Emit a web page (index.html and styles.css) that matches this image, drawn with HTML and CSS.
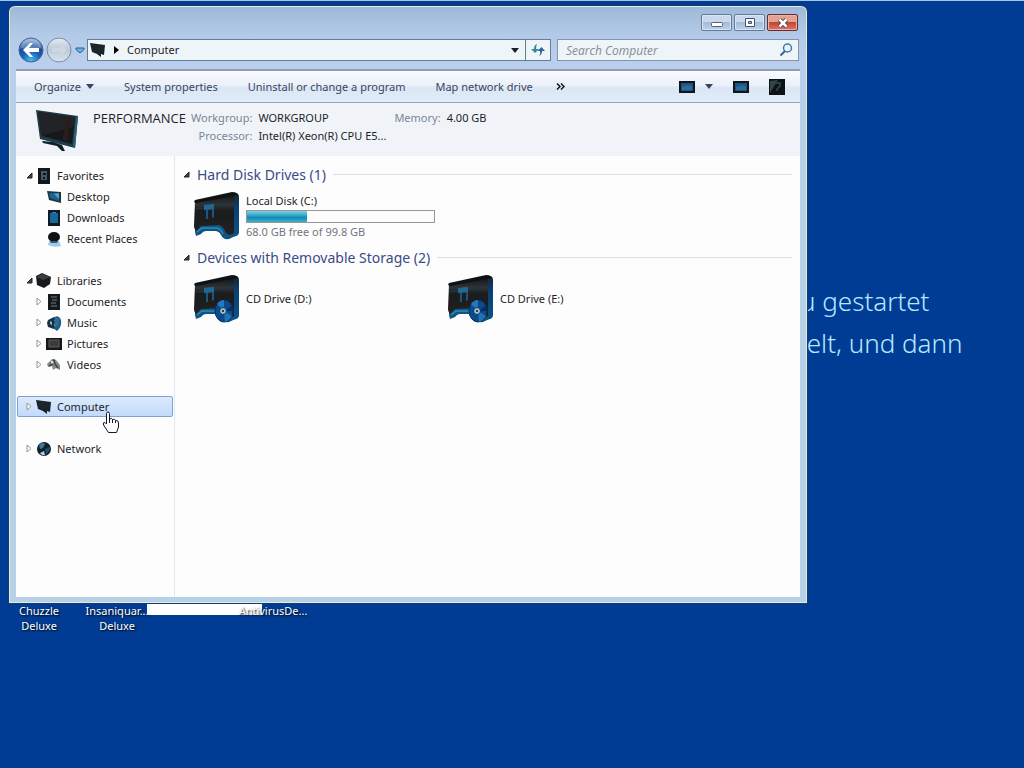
FILE: index.html
```html
<!DOCTYPE html>
<html lang="en">
<head>
  <meta charset="UTF-8">
  <meta name="viewport" content="width=device-width, initial-scale=1">
  <title>Computer</title>
  <link rel="stylesheet" href="styles.css">
</head>
<body>
  <svg class="defs" aria-hidden="true">
    <defs>
      <linearGradient id="blue-side" x1="0" y1="0" x2="0" y2="1">
        <stop offset="0" stop-color="#16222b"/>
        <stop offset=".3" stop-color="#0a3f70"/>
        <stop offset="1" stop-color="#0b5488"/>
      </linearGradient>
      <linearGradient id="case" x1="0" y1="0" x2="0" y2="1">
        <stop offset="0" stop-color="#101214"/>
        <stop offset=".25" stop-color="#303336"/>
        <stop offset=".4" stop-color="#1a1c1e"/>
        <stop offset="1" stop-color="#25201e"/>
      </linearGradient>
      <radialGradient id="back-fill" cx=".5" cy=".95" r=".9">
        <stop offset="0" stop-color="#4cc0f2"/>
        <stop offset=".45" stop-color="#1560b4"/>
        <stop offset=".7" stop-color="#1a4f9c"/>
        <stop offset="1" stop-color="#9db8de"/>
      </radialGradient>
      <linearGradient id="fwd-fill" x1="0" y1="0" x2="0" y2="1">
        <stop offset="0" stop-color="#e3eaf3"/>
        <stop offset=".5" stop-color="#bcc9d8"/>
        <stop offset="1" stop-color="#dbe5f0"/>
      </linearGradient>
    </defs>

    <symbol id="monitor" viewBox="0 0 44 44">
      <path d="M1 1 L43 7 L40 39 L5 30 Z" fill="#1c3d4b"/>
      <path d="M3 3 L40 8 L37 35 L7 27 Z" fill="#17181b"/>
      <path d="M3 3 L40 8 L38 18 Q20 24 6 26 Z" fill="#222326"/>
      <path d="M31 9 L35 9 L33 32 L28 31 Z" fill="#2a1e1c"/>
      <path d="M41 8 L43 7 L40 39 L38 37 Z" fill="#2b5f72"/>
      <path d="M18 33 L27 36 L30 42 L27 42 L22 37 L8 34 L7 32 Z" fill="#0e2029"/>
    </symbol>

    <symbol id="drive" viewBox="0 0 46 48">
      <path d="M1 9 L38 1 Q45 0 45 5 V40 Q45 43 42 44 L34 47 Q28 47 28 42 V35 L1 40 Z" fill="url(#blue-side)"/>
      <path d="M1 9 L38 2 Q40 2 40 4 V41 L34 44 L28 38 L24 36 H9 L5 40 Q0 39 0 34 Z" fill="url(#case)"/>
      <path d="M0 10 L1 8 L38 0 Q43 0 44 3 L39 4 L2 11 Z" fill="#0e1215"/>
      <path d="M2 17 L38 12" stroke="#1a3a4c"/>
      <path d="M10 13 L20 12 V25 L18 26 V17 L14 18 V27 L12 27 V18 L10 17 Z" fill="#1b557c"/>
      <path d="M10 13 L20 12 V17 L10 18 Z" fill="#236791"/>
      <path d="M1 40 L7 34 L25 33 Q29 34 31 39 Q33 43 37 43 L42 43 L35 47 Q29 48 27 43 Q25 39 21 39 H12 Q9 39 7 42 L2 44 Z" fill="#0f5580"/>
      <path d="M3 40 L8 36 H23 Q27 37 29 42" fill="none" stroke="#2f8bb6" stroke-width="1.500"/>
    </symbol>

    <symbol id="disc" viewBox="0 0 20 24">
      <ellipse cx="10" cy="12" rx="9" ry="11" fill="#0c4a90" stroke="#073057"/>
      <path d="M10 12 L3 5 Q6 1 10 1 Z" fill="#2478bd"/>
      <path d="M10 12 L18 17 Q15 22 11 23 Z" fill="#1f74b5"/>
      <path d="M10 12 L18 7 L19 12 Z" fill="#052f63"/>
      <circle cx="9" cy="12" r="3.500" fill="#8fc3d2" stroke="#0b3356"/>
      <circle cx="9" cy="12" r="1" fill="#111"/>
    </symbol>

    <symbol id="computer" viewBox="0 0 16 16">
      <path d="M0 1 L15 3 L14 13 L11 12 L11 15 L7 12 L2 10 Z" fill="#13262e"/>
      <path d="M1 2 L14 4 L12 9 L3 9 Z" fill="#1e2427"/>
    </symbol>
    <symbol id="favorites" viewBox="0 0 16 16">
      <path d="M2 0 H14 V16 H2 Z" fill="#12191e"/>
      <path d="M5 3 H11 V12 H5 Z M7 5 V7 H10 V5 Z M7 9 V11 H9 V9 Z" fill="#455764" fill-rule="evenodd"/>
    </symbol>
    <symbol id="desktop" viewBox="0 0 16 16">
      <path d="M1 2 L15 3 V14 L3 11 Z" fill="#22333c"/>
      <path d="M3 4 L13 4 V12 L4 9 Z" fill="#146596"/>
      <path d="M8 5 L13 4 V10 Z" fill="#4ba6c6"/>
    </symbol>
    <symbol id="downloads" viewBox="0 0 16 16">
      <path d="M2 0 H14 V16 H2 Z" fill="#101b21"/>
      <path d="M4 3 H12 V13 H4 Z" fill="#18699b"/>
      <path d="M6 3 H10 V2 H6 Z" fill="#2b8abb"/>
    </symbol>
    <symbol id="recent" viewBox="0 0 16 16">
      <path d="M3 10 H13 L15 15 Q8 17 2 14 Z" fill="#9fcaea"/>
      <ellipse cx="8" cy="6" rx="6" ry="5" fill="#0d1216"/>
      <path d="M4 10 H12 L11 12 H5 Z" fill="#315b77"/>
    </symbol>
    <symbol id="libraries" viewBox="0 0 16 16">
      <path d="M0 3 L6 0 L15 4 L14 11 L8 15 L1 12 Z" fill="#17191b"/>
      <path d="M0 4 L6 1 L15 4 L7 7 Z" fill="#3a3d3f"/>
    </symbol>
    <symbol id="documents" viewBox="0 0 16 16">
      <path d="M2 0 H14 V16 H2 Z" fill="#14191d"/>
      <path d="M5 3 H11 M6 6 H11 M5 9 H10 M5 12 H11" stroke="#727c82"/>
    </symbol>
    <symbol id="music" viewBox="0 0 16 16">
      <path d="M6 4 Q12 -2 15 5 Q16 12 11 16 L7 13 Q11 9 9 5 Z" fill="#205d85"/>
      <path d="M2 5 L8 2 L9 7 L8 14 L2 12 L1 8 Z" fill="#153247"/>
      <path d="M4 6 L6 7 V10 L4 9 Z" fill="#81b9d0"/>
      <path d="M9 3 L13 3 L12 11 L9 12 Z" fill="#2c7098"/>
    </symbol>
    <symbol id="pictures" viewBox="0 0 16 16">
      <path d="M0 2 H16 V14 H0 Z" fill="#171717"/>
      <path d="M3 4 H13 V11 H3 Z" fill="#393b3d" stroke="#5b5e60"/>
    </symbol>
    <symbol id="videos" viewBox="0 0 16 16">
      <path d="M1 7 L6 2 L10 3 L14 8 L14 13 L10 11 L7 13 L6 9 L2 10 Z" fill="#85898a"/>
      <path d="M4 6 L8 3 L9 7 L12 11 M3 9 L7 7" fill="none" stroke="#3d4243" stroke-width="1.500"/>
      <circle cx="6" cy="5" r="1.500" fill="#d5dada"/>
    </symbol>
    <symbol id="network" viewBox="0 0 16 16">
      <circle cx="8" cy="8" r="7" fill="#10202c"/>
      <path d="M3 4 Q6 0 9 3 L7 7 L4 8 Z" fill="#3f7596"/>
      <path d="M9 8 L14 6 Q14 11 10 13 Z" fill="#1d4f70"/>
      <path d="M4 12 L8 10 L9 14 Q6 15 4 12 Z" fill="#b3cad7"/>
    </symbol>
    <symbol id="caret" viewBox="0 0 8 5">
      <path d="M0 0 H8 L4 5 Z" fill="currentColor"/>
    </symbol>
    <symbol id="open" viewBox="0 0 7 7">
      <path d="M6 1 V6 H1 Z" fill="#444" stroke="#222"/>
    </symbol>
    <symbol id="closed" viewBox="0 0 7 9">
      <path d="M1 1 L5 4.500 L1 8 Z" fill="#fff" stroke="#989898"/>
    </symbol>
    <symbol id="view" viewBox="0 0 16 14">
      <path d="M0 1 H16 V13 H0 Z" fill="#0f161b"/>
      <path d="M2 3 H14 V11 H2 Z" fill="#1d5580"/>
      <path d="M3 7 Q8 4 13 6 V10 H3 Z" fill="#2a6c9c"/>
    </symbol>
  </svg>

  <main class="desktop">
    <p class="wallpaper-text">u gestartet<br>&nbsp;elt, und dann</p>

    <div class="white-strip"></div>
    <div class="shortcuts">
      <a href="#">Chuzzle Deluxe</a>
      <a href="#">Insaniquar... Deluxe</a>
      <span></span>
      <a href="#">AntivirusDe...</a>
    </div>

    <section class="window" aria-label="Computer">
      <header class="title-bar">
        <button class="caption" aria-label="Minimize">
          <svg width="14" height="12" viewBox="0 0 14 12"><rect x="1.500" y="5.500" width="11" height="4" rx="1" fill="#fff" stroke="#52617a"/></svg>
        </button>
        <button class="caption" aria-label="Maximize">
          <svg width="12" height="12" viewBox="0 0 12 12"><path d="M1.500 1.500 H10.500 V9.500 H1.500 Z M4.500 4.500 V6.500 H7.500 V4.500 Z" fill="#fff" fill-rule="evenodd" stroke="#46536c"/></svg>
        </button>
        <button class="caption close" aria-label="Close">
          <svg width="14" height="12" viewBox="0 0 14 12"><path d="M3.500 2.500 L10.500 9.500 M10.500 2.500 L3.500 9.500" stroke="#603a42" stroke-width="4.500"/><path d="M3.500 2.500 L10.500 9.500 M10.500 2.500 L3.500 9.500" stroke="#fff" stroke-width="2.500"/></svg>
        </button>
      </header>

      <div class="address-row">
        <div class="history">
          <button aria-label="Back">
            <svg width="26" height="26" viewBox="0 0 26 26"><circle cx="13" cy="13" r="12" fill="url(#back-fill)" stroke="#42618f"/><path d="M3 11 Q4 3 13 2 Q22 3 23 11 Q13 14 3 11 Z" fill="#c9d8ee" opacity=".35"/><path d="M5 13 L12 6 H15 L11 11 H21 V15 H11 L15 20 H12 Z" fill="#fff"/></svg>
          </button>
          <button aria-label="Forward">
            <svg width="26" height="26" viewBox="0 0 26 26"><circle cx="13" cy="13" r="12" fill="url(#fwd-fill)" stroke="#7f8c9f"/><path d="M21 13 L14 7 V11 H6 V15 H14 V19 Z" fill="#ccd7e3"/></svg>
          </button>
          <button class="recent" aria-label="Recent pages">
            <svg width="10" height="7" viewBox="0 0 10 7"><path d="M1 1 H9 V2.500 L5 6 L1 2.500 Z" fill="#6fb3da" stroke="#245f93"/></svg>
          </button>
        </div>
        <div class="address">
          <svg class="icon" width="16" height="16"><use href="#computer"/></svg>
          <svg class="crumb-arrow" width="5" height="8" viewBox="0 0 5 8"><path d="M0 0 L5 4 L0 8 Z"/></svg>
          <a href="#">Computer</a>
          <button class="drop" aria-label="Previous locations"><svg width="8" height="5"><use href="#caret"/></svg></button>
          <button class="refresh" aria-label="Refresh">
            <svg width="14" height="14" viewBox="0 0 14 14"><path d="M6 1 Q3 2 3 6 H0 L4 10 L8 6 H5 Q5 3 6 1 Z" fill="#3b8592"/><path d="M8 13 Q11 12 11 8 H14 L10.500 4 L6.500 8 H9 Q10 11 8 13 Z" fill="#2b64a8"/></svg>
          </button>
        </div>
        <div class="search">
          <input type="text" aria-label="Search Computer" placeholder="Search Computer">
          <svg width="14" height="14" viewBox="0 0 14 14"><circle cx="8.500" cy="5" r="4" fill="#e5f3fb" stroke="#4179a8" stroke-width="1.500"/><path d="M6 8 L1.500 12.500" stroke="#38638d" stroke-width="2"/></svg>
        </div>
      </div>

      <div class="client">
        <div class="toolbar">
          <button>Organize <svg width="8" height="5"><use href="#caret"/></svg></button>
          <button>System properties</button>
          <button>Uninstall or change a program</button>
          <button>Map network drive</button>
          <button class="more" aria-label="More commands">
            <svg width="9" height="7" viewBox="0 0 9 7"><path d="M1 0.500 L4 3.500 L1 6.500 M5 0.500 L8 3.500 L5 6.500" fill="none" stroke="#15151c" stroke-width="1.500"/></svg>
          </button>
          <div class="view-tools">
            <button aria-label="Change your view"><svg width="16" height="14"><use href="#view"/></svg><svg width="8" height="5"><use href="#caret"/></svg></button>
            <button aria-label="Show the preview pane"><svg width="16" height="14"><use href="#view"/></svg></button>
            <button aria-label="Get help">
              <svg width="16" height="16" viewBox="0 0 16 16"><path d="M0 0 H16 V16 H0 Z" fill="#0d1215"/><path d="M1 14 V2 L9 1 Z" fill="#35434c"/><path d="M7 4 H11 V7 L8 10 V12" fill="none" stroke="#2d485c" stroke-width="1.500"/></svg>
            </button>
          </div>
        </div>

        <div class="details">
          <svg width="44" height="44"><use href="#monitor"/></svg>
          <span class="name">PERFORMANCE</span>
          <dl>
            <dt>Workgroup:</dt><dd>WORKGROUP</dd>
            <dt>Processor:</dt><dd>Intel(R) Xeon(R) CPU E5...</dd>
          </dl>
          <dl>
            <dt>Memory:</dt><dd>4.00 GB</dd>
          </dl>
        </div>

        <div class="panes">
          <nav class="tree">
            <ul>
              <li><a href="#"><svg class="toggle" width="7" height="7"><use href="#open"/></svg><svg width="16" height="16"><use href="#favorites"/></svg>Favorites</a>
                <ul>
                  <li><a href="#"><span class="toggle"></span><svg width="16" height="16"><use href="#desktop"/></svg>Desktop</a></li>
                  <li><a href="#"><span class="toggle"></span><svg width="16" height="16"><use href="#downloads"/></svg>Downloads</a></li>
                  <li><a href="#"><span class="toggle"></span><svg width="16" height="16"><use href="#recent"/></svg>Recent Places</a></li>
                </ul>
              </li>
              <li><a href="#"><svg class="toggle" width="7" height="7"><use href="#open"/></svg><svg width="16" height="16"><use href="#libraries"/></svg>Libraries</a>
                <ul>
                  <li><a href="#"><svg class="toggle" width="7" height="9"><use href="#closed"/></svg><svg width="16" height="16"><use href="#documents"/></svg>Documents</a></li>
                  <li><a href="#"><svg class="toggle" width="7" height="9"><use href="#closed"/></svg><svg width="16" height="16"><use href="#music"/></svg>Music</a></li>
                  <li><a href="#"><svg class="toggle" width="7" height="9"><use href="#closed"/></svg><svg width="16" height="16"><use href="#pictures"/></svg>Pictures</a></li>
                  <li><a href="#"><svg class="toggle" width="7" height="9"><use href="#closed"/></svg><svg width="16" height="16"><use href="#videos"/></svg>Videos</a></li>
                </ul>
              </li>
              <li><a class="selected" href="#"><svg class="toggle" width="7" height="9"><use href="#closed"/></svg><svg width="16" height="16"><use href="#computer"/></svg>Computer</a></li>
              <li><a href="#"><svg class="toggle" width="7" height="9"><use href="#closed"/></svg><svg width="16" height="16"><use href="#network"/></svg>Network</a></li>
            </ul>
          </nav>

          <div class="files">
            <h2><svg width="7" height="7"><use href="#open"/></svg>Hard Disk Drives (1)</h2>
            <div class="drives">
              <a class="drive" href="#">
                <svg width="46" height="48"><use href="#drive"/></svg>
                <div class="drive-info">
                  <span>Local Disk (C:)</span>
                  <div class="usage"><div class="used" style="width: 32%"></div></div>
                  <span class="free">68.0 GB free of 99.8 GB</span>
                </div>
              </a>
            </div>
            <h2><svg width="7" height="7"><use href="#open"/></svg>Devices with Removable Storage (2)</h2>
            <div class="drives">
              <a class="drive" href="#">
                <svg width="46" height="48"><use href="#drive"/><use href="#disc" x="20" y="24" width="20" height="24"/></svg>
                <span>CD Drive (D:)</span>
              </a>
              <a class="drive" href="#">
                <svg width="46" height="48"><use href="#drive"/><use href="#disc" x="20" y="24" width="20" height="24"/></svg>
                <span>CD Drive (E:)</span>
              </a>
            </div>
          </div>
        </div>
      </div>
    </section>

    <svg class="cursor" width="18" height="23" viewBox="0 0 18 23" aria-hidden="true">
      <path d="M4.500 13 V2.500 Q4.500 1 6 1 Q7.500 1 7.500 2.500 V8 Q10 6.500 10.500 8.500 Q13 7.500 13.500 9.500 Q16.500 9 16.500 12 V16 L14.500 21.500 H6.500 L1.500 14 Q0.500 11 3 11.500 Z" fill="#fff" stroke="#16182a"/>
      <path d="M7.500 8 V12 M10.500 8.500 V12 M13.500 9.500 V12" stroke="#16182a"/>
    </svg>
  </main>
</body>
</html>
```
FILE: styles.css
```css
* {
  box-sizing: border-box;
}
body {
  margin: 0;
  font-family: "Noto Sans", "Open Sans", sans-serif;
  font-size: 11px;
  line-height: 18px;
  color: #1e1e28;
}
button {
  margin: 0;
  padding: 0;
  border: none;
  background: none;
  font: inherit;
  color: inherit;
}
a {
  color: inherit;
  text-decoration: none;
}
svg {
  display: block;
  flex: none;
}
.defs {
  position: absolute;
  width: 0;
  height: 0;
}
.desktop {
  position: relative;
  min-height: 100vh;
  overflow: hidden;
  background: #003c94;
  border-top: 1px solid #a9c6e4;
}
.wallpaper-text {
  position: absolute;
  left: 800px;
  top: 279px;
  margin: 0;
  font-size: 26px;
  font-weight: 300;
  line-height: 42px;
  color: #b8e8ff;
  white-space: nowrap;
}
.white-strip {
  position: absolute;
  left: 147px;
  top: 602px;
  width: 115px;
  height: 12px;
  background: #fff;
}
.shortcuts {
  position: absolute;
  left: 0;
  top: 602px;
  display: grid;
  grid-template-columns: repeat(4, 78px);
  line-height: 15px;
  color: #fff;
  text-align: center;
  text-shadow: 1px 1px 2px #000;
}

/* window frame */
.window {
  position: absolute;
  left: 8px;
  right: 216px;
  top: 4px;
  bottom: 164px;
  display: flex;
  flex-direction: column;
  padding: 0 7px 6px;
  border: 1px solid #1b3c5c;
  border-radius: 7px 7px 0 0;
  background: linear-gradient(#9db8d7, #b3cbe8 30px, #bccfee 64px, #b7d2e6 120px);
  box-shadow: inset 0 0 0 1px #d8ebf8;
}
.title-bar {
  display: flex;
  justify-content: flex-end;
  gap: 2px;
  padding: 8px 2px 0;
}
.caption {
  display: flex;
  align-items: center;
  justify-content: center;
  width: 31px;
  height: 17px;
  border: 1px solid #637b9b;
  border-radius: 2px;
  background: linear-gradient(#c9d9ed 45%, #a5bbd6 50%, #bdd3eb);
  box-shadow: inset 0 0 0 1px #d7e5f4;
}
.caption.close {
  border-color: #6b2733;
  background: linear-gradient(#e3a294 45%, #c24636 50%, #d97763);
  box-shadow: inset 0 0 0 1px #eab5a9;
}
.address-row {
  display: flex;
  align-items: center;
  height: 38px;
  padding: 0 1px 0 2px;
}
.history {
  display: flex;
  align-items: center;
  gap: 2px;
  width: 69px;
}
.history .recent {
  margin-left: 1px;
}
.address {
  display: flex;
  flex: 1;
  align-items: center;
  height: 22px;
  border: 1px solid #667d93;
  background: #eef5f9;
}
.address .icon {
  margin: 0 8px 0 2px;
}
.crumb-arrow {
  margin-right: 8px;
}
.drop {
  display: flex;
  justify-content: center;
  width: 20px;
  margin-left: auto;
}
.refresh {
  display: flex;
  align-items: center;
  justify-content: center;
  align-self: stretch;
  width: 25px;
  border-left: 1px solid #667d93;
}
.search {
  display: flex;
  align-items: center;
  width: 242px;
  height: 22px;
  margin-left: 6px;
  padding: 0 5px 0 8px;
  border: 1px solid #8296ab;
  background: #eef5f9;
}
.search input {
  flex: 1;
  min-width: 0;
  padding: 0;
  border: none;
  outline: none;
  background: none;
  font: italic 12px "Open Sans", sans-serif;
}
.search input::placeholder {
  color: #858b90;
  opacity: 1;
}
.client {
  display: flex;
  flex: 1;
  flex-direction: column;
  min-height: 0;
  background: #fdfdfe;
}

/* command bar */
.toolbar {
  display: flex;
  align-items: center;
  height: 34px;
  padding-left: 3px;
  border-top: 2px solid #8e9db5;
  border-bottom: 1px solid #8fa5b9;
  background: linear-gradient(#f8fbfe, #eaf0fa 48%, #dce6f4 52%, #e0ecf8);
  color: #38455e;
  white-space: nowrap;
}
.toolbar button {
  display: flex;
  align-items: center;
  gap: 5px;
  padding: 0 15px;
}
.toolbar .more {
  padding: 0 8px;
}
.toolbar .view-tools {
  display: flex;
  align-items: center;
  gap: 20px;
  margin-left: auto;
  padding-right: 15px;
}
.toolbar .view-tools button {
  gap: 10px;
  padding: 0;
}

.details {
  display: flex;
  height: 53px;
  padding: 6px 0 0 19px;
  background: #f0f4f9;
  white-space: nowrap;
}
.details .name {
  margin: 0 5px 0 14px;
  font-family: "Open Sans", sans-serif;
  font-size: 13px;
}
.details dl {
  display: grid;
  grid-template-columns: auto auto;
  align-content: start;
  column-gap: 6px;
  margin: 0 8px 0 0;
}
.details dt {
  color: #7a8595;
  text-align: right;
}
.details dd {
  margin: 0;
}

.panes {
  display: flex;
  flex: 1;
  min-height: 0;
}
.tree {
  width: 159px;
  padding: 9px 1px 0;
  border-right: 1px solid #dfe7f0;
}
.tree ul {
  margin: 0;
  padding: 0;
  list-style: none;
}
.tree > ul > li {
  margin-bottom: 21px;
}
.tree a {
  display: flex;
  align-items: center;
  gap: 5px;
  height: 21px;
  padding-left: 8px;
  border: 1px solid transparent;
}
.tree li li a {
  padding-left: 18px;
}
.tree .toggle {
  width: 7px;
  margin-right: -2px;
}
.tree .selected {
  border-color: #7da2ce;
  border-radius: 2px;
  background: linear-gradient(#dceafc, #c1dbfc);
}

.files {
  flex: 1;
  padding: 8px 8px 0 8px;
}
.files h2 {
  display: flex;
  align-items: center;
  gap: 7px;
  height: 21px;
  margin: 0;
  font-size: 14px;
  font-weight: 400;
  color: #3b4a86;
}
.files h2::after {
  content: "";
  flex: 1;
  height: 1px;
  background: #dcdfe6;
}
.drives {
  display: grid;
  grid-template-columns: repeat(auto-fill, 254px);
  padding-left: 11px;
}
.drive {
  display: flex;
  align-items: center;
  gap: 6px;
  height: 62px;
}
.drive-info {
  display: flex;
  flex-direction: column;
  width: 189px;
}
.usage {
  height: 13px;
  border: 1px solid #979797;
  background: #fcfcfd;
}
.used {
  height: 100%;
  background: linear-gradient(#7fd0e4, #28a3c4 45%, #1589ae 60%, #3cb3d0);
}
.free {
  color: #717680;
}

.cursor {
  position: absolute;
  left: 102px;
  top: 410px;
}
```
